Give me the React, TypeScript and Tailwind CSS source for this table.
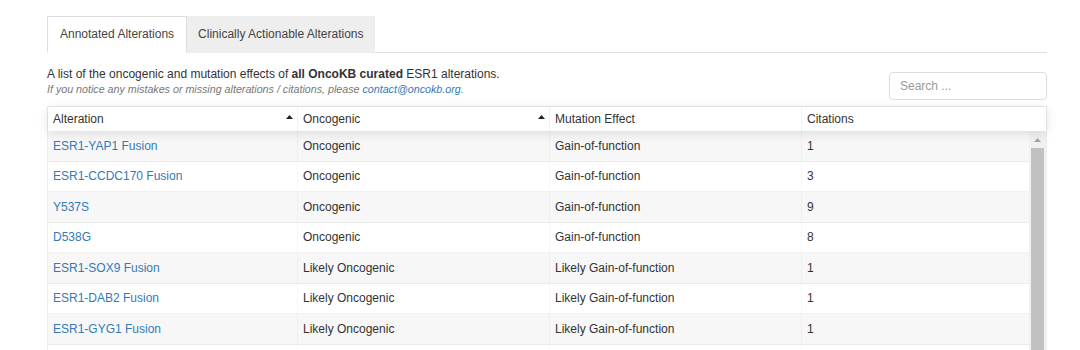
const rows = [
  { alteration: "ESR1-YAP1 Fusion", oncogenic: "Oncogenic", effect: "Gain-of-function", citations: "1" },
  { alteration: "ESR1-CCDC170 Fusion", oncogenic: "Oncogenic", effect: "Gain-of-function", citations: "3" },
  { alteration: "Y537S", oncogenic: "Oncogenic", effect: "Gain-of-function", citations: "9" },
  { alteration: "D538G", oncogenic: "Oncogenic", effect: "Gain-of-function", citations: "8" },
  { alteration: "ESR1-SOX9 Fusion", oncogenic: "Likely Oncogenic", effect: "Likely Gain-of-function", citations: "1" },
  { alteration: "ESR1-DAB2 Fusion", oncogenic: "Likely Oncogenic", effect: "Likely Gain-of-function", citations: "1" },
  { alteration: "ESR1-GYG1 Fusion", oncogenic: "Likely Oncogenic", effect: "Likely Gain-of-function", citations: "1" },
];

function SortArrow() {
  return (
    <svg width="7" height="4" viewBox="0 0 7 4" className="mr-[4px] mb-[5px]">
      <path d="M0 4 L3.5 0 L7 4 Z" fill="#222" />
    </svg>
  );
}

export default function App() {
  return (
    <div className="h-[350px] w-[1080px] overflow-hidden bg-white font-['Liberation_Sans',Arial,sans-serif] text-[#333]">
      <div className="ml-[47px] w-[1000px] pt-[16px]">
        {/* Tabs */}
        <div className="flex border-b border-[#ddd]">
          <div className="-mb-px border border-[#ddd] border-b-white bg-white px-[12px] py-[9px] text-[12px] leading-[17px] text-[#444]">
            Annotated Alterations
          </div>
          <div className="-mb-px border border-transparent bg-[#eee] px-[10px] py-[9px] text-[12px] leading-[17px] text-[#444]">
            Clinically Actionable Alterations
          </div>
        </div>

        {/* Description + search */}
        <div className="mt-[13px] flex items-start justify-between">
          <div>
            <p className="text-[12px] leading-[16px]">
              A list of the oncogenic and mutation effects of <b>all OncoKB curated</b> ESR1 alterations.
            </p>
            <p className="text-[10.7px] italic leading-[15px] text-[#777]">
              If you notice any mistakes or missing alterations / citations, please{" "}
              <a className="text-[#337ab7]" href="#">contact@oncokb.org</a>.
            </p>
          </div>
          <div className="mt-[6px] flex h-[28px] w-[158px] items-center rounded-[4px] border border-[#ddd] px-[10px] text-[12px] text-[#999]">
            Search ...
          </div>
        </div>

        {/* Table */}
        <div className="mt-[6px] border-x border-t border-[rgba(0,0,0,0.08)] text-[12px]">
          <div className="relative z-10 grid h-[24px] grid-cols-[250px_252px_252px_1fr] shadow-[0_2px_12px_0_rgba(0,0,0,0.12)]">
            <div className="flex items-center justify-between border-r border-[rgba(0,0,0,0.05)] pl-[5px]">
              Alteration
              <SortArrow />
            </div>
            <div className="flex items-center justify-between border-r border-[rgba(0,0,0,0.05)] pl-[5px]">
              Oncogenic
              <SortArrow />
            </div>
            <div className="flex items-center border-r border-[rgba(0,0,0,0.05)] pl-[5px]">Mutation Effect</div>
            <div className="flex items-center pl-[5px]">Citations</div>
          </div>
          <div className="flex h-[240px]">
            <div className="flex-1">
              {rows.map((r, i) => (
                <div
                  key={r.alteration}
                  className={`grid h-[30.5px] grid-cols-[250px_252px_252px_1fr] border-b border-[rgba(0,0,0,0.05)] ${
                    i % 2 === 0 ? "bg-[#f7f7f7]" : "bg-white"
                  }`}
                >
                  <div className="flex items-center border-r border-[rgba(0,0,0,0.03)] pl-[5px] text-[#337ab7]">
                    {r.alteration}
                  </div>
                  <div className="flex items-center border-r border-[rgba(0,0,0,0.03)] pl-[5px]">{r.oncogenic}</div>
                  <div className="flex items-center border-r border-[rgba(0,0,0,0.03)] pl-[5px]">{r.effect}</div>
                  <div className="flex items-center pl-[5px]">{r.citations}</div>
                </div>
              ))}
              <div className="grid h-[30.5px] grid-cols-[250px_252px_252px_1fr] bg-white">
                <div className="border-r border-[rgba(0,0,0,0.03)]" />
                <div className="border-r border-[rgba(0,0,0,0.03)]" />
                <div className="border-r border-[rgba(0,0,0,0.03)]" />
                <div />
              </div>
            </div>
            {/* Scrollbar */}
            <div className="flex w-[17px] flex-col items-center bg-[#f1f1f1]">
              <div className="flex h-[17px] w-full items-center justify-center">
                <svg width="7" height="4" viewBox="0 0 7 4">
                  <path d="M0 4 L3.5 0 L7 4 Z" fill="#a3a3a3" />
                </svg>
              </div>
              <div className="h-[220px] w-[13px] bg-[#c1c1c1]" />
            </div>
          </div>
        </div>
      </div>
    </div>
  );
}
